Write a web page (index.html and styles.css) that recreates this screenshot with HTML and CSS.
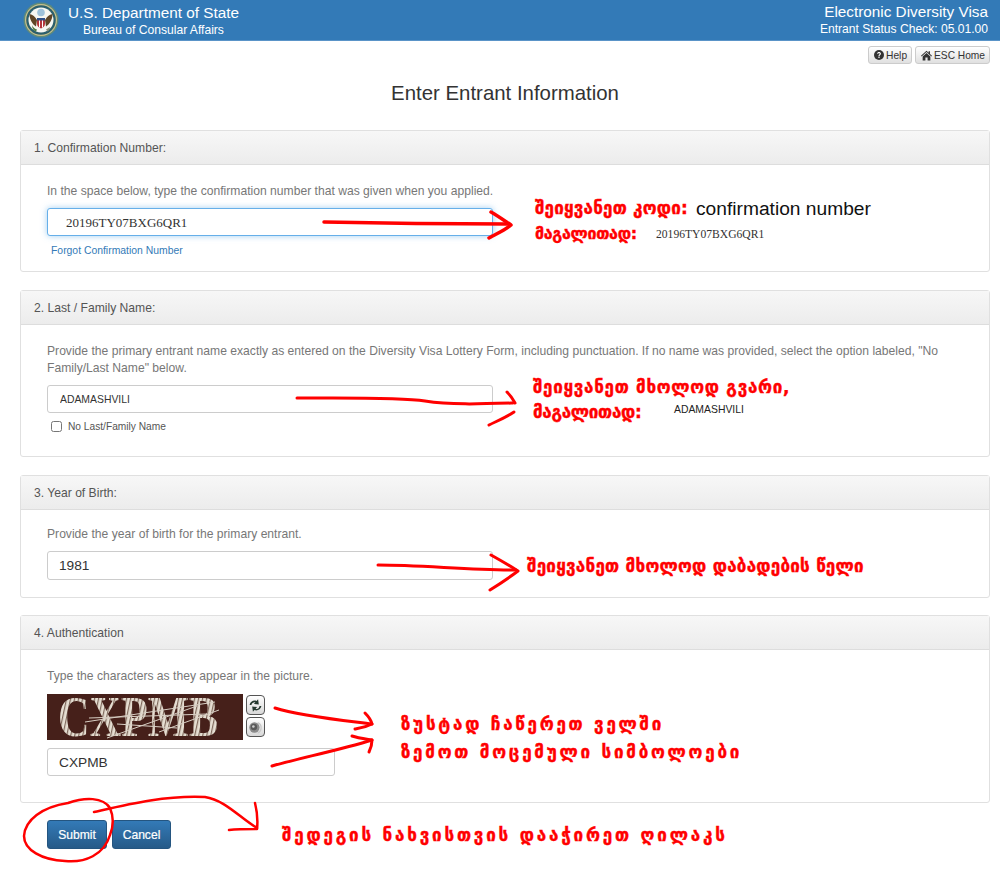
FILE: index.html
```html
<!DOCTYPE html>
<html lang="ka">
<head>
  <meta charset="UTF-8" />
  <title>Electronic Diversity Visa</title>
  <link rel="stylesheet" href="styles.css">
</head>
<body>
  <header class="topbar">
    <div class="brand">
      <svg class="seal" viewBox="0 0 36 36" width="36" height="36">
        <circle cx="18" cy="18" r="17.5" fill="#5e8a7c"/>
        <circle cx="18" cy="18" r="16" fill="#c9c08a"/>
        <circle cx="18" cy="18" r="14.800" fill="#2c5f6c"/>
        <circle cx="18" cy="18" r="12.500" fill="#f7f7f2"/>
        <circle cx="18" cy="10.500" r="3.800" fill="#9fc2da"/>
        <path d="M6.500 12c3.500.5 5.500 2.500 7.500 6l-1 6.500c-3.500-2-6.500-7-6.500-12.500zM29.500 12c-3.500.5-5.500 2.500-7.500 6l1 6.500c3.500-2 6.500-7 6.500-12.500z" fill="#5f4526"/>
        <path d="M14 16h8v6c0 2-2 3.500-4 4.500-2-1-4-2.500-4-4.500z" fill="#b5353a"/>
        <path d="M14 16h8v2.500h-8z" fill="#2f4f86"/>
        <path d="M16 18.500h1v7h-1zM19 18.500h1v7h-1z" fill="#fff"/>
        <path d="M9 23c1 2.500 3 4 5 4.500l-1 2c-2-.5-4-3-4-6.500z" fill="#4d7a3f"/>
        <path d="M27 25l-4 2.500 1.500 2c1.500-1 2.500-2.500 2.500-4.500z" fill="#8a8f7a"/>
      </svg>
      <div class="brand-text">
        <div class="brand-title">U.S. Department of State</div>
        <div class="brand-sub">Bureau of Consular Affairs</div>
      </div>
    </div>
    <div class="app-info">
      <div class="app-title">Electronic Diversity Visa</div>
      <div class="app-sub">Entrant Status Check: 05.01.00</div>
    </div>
  </header>

  <main class="page">
    <nav class="tools">
      <a class="tool-btn">
        <svg viewBox="0 0 12 12" width="10" height="10"><circle cx="6" cy="6" r="6" fill="#333"/><path d="M3.800 4.600C3.800 3.300 4.800 2.500 6 2.500s2.300.8 2.300 2c0 1.700-1.600 1.500-1.600 3H5.300c0-2.100 1.500-1.900 1.500-3 0-.4-.3-.8-.8-.8s-.9.4-.9.9zM5.300 8.200h1.400v1.400H5.300z" fill="#fff"/></svg>
        Help
      </a>
      <a class="tool-btn">
        <svg viewBox="0 0 12 12" width="11" height="11"><path d="M6 .8L0 6.300l.7.7L6 2.200 11.300 7l.7-.7L9.800 4.300V1.300H8.300v1.600zM1.800 7.200v4.300h3V8.200h2.400v3.300h3V7.200L6 3.400z" fill="#333"/></svg>
        ESC Home
      </a>
    </nav>

    <h1 class="page-title">Enter Entrant Information</h1>

    <section class="panel">
      <div class="panel-head">1. Confirmation Number:</div>
      <div class="panel-body body-confirm">
        <p class="hint">In the space below, type the confirmation number that was given when you applied.</p>
        <input class="field field-code" type="text" value="20196TY07BXG6QR1">
        <a class="forgot">Forgot Confirmation Number</a>
      </div>
    </section>

    <section class="panel">
      <div class="panel-head">2. Last / Family Name:</div>
      <div class="panel-body body-name">
        <p class="hint">Provide the primary entrant name exactly as entered on the Diversity Visa Lottery Form, including punctuation. If no name was provided, select the option labeled, "No Family/Last Name" below.</p>
        <input class="field field-name" type="text" value="ADAMASHVILI">
        <label class="check"><input type="checkbox"> No Last/Family Name</label>
      </div>
    </section>

    <section class="panel panel-year">
      <div class="panel-head">3. Year of Birth:</div>
      <div class="panel-body body-year">
        <p class="hint">Provide the year of birth for the primary entrant.</p>
        <input class="field field-big" type="text" value="1981">
      </div>
    </section>

    <section class="panel">
      <div class="panel-head">4. Authentication</div>
      <div class="panel-body body-auth">
        <p class="hint">Type the characters as they appear in the picture.</p>
        <div class="captcha-row">
          <svg class="captcha" viewBox="0 0 196 46" width="196" height="46">
            <defs>
              <pattern id="stripes" width="4" height="5" patternUnits="userSpaceOnUse" patternTransform="skewX(-12)">
                <rect width="4" height="5" fill="#e6ded2"/>
                <rect width="1.200" height="5" fill="#7d675a"/>
              </pattern>
            </defs>
            <rect width="196" height="46" fill="#46201a"/>
            <text class="captcha-text" x="11" y="42" fill="url(#stripes)" textLength="160" lengthAdjust="spacingAndGlyphs">CXPMB</text>
            <path d="M38 28L168 8M42 24L160 20M60 44L150 12M112 38L172 16M70 30L130 34" stroke="#d8cfc4" stroke-width="1" fill="none"/>
          </svg>
          <div class="captcha-tools">
            <button class="captcha-btn" type="button">
              <svg viewBox="0 0 14 14" width="15" height="15"><path d="M1.500 6.500C2 3.500 5.300 1.600 8 2.800L9.400 1.200l.7 4.800-4.600-.5 1.400-1.500C5.300 3.700 3.600 4.600 3.200 6.500zM12.500 7.500c-.5 3-3.800 4.900-6.500 3.700l-1.400 1.600-.7-4.800 4.600.5-1.400 1.500c1.600.8 3.300-.1 3.700-2.500z" fill="#24392f"/></svg>
            </button>
            <button class="captcha-btn" type="button">
              <svg viewBox="0 0 14 14" width="15" height="15"><path d="M9 2.500c2.500 1 3.500 3 3.200 5.500-.3 2.200-1.600 3.500-3.200 4" stroke="#c8c8c8" stroke-width="1.200" fill="none"/><circle cx="6" cy="7" r="4.800" fill="#8a8a8a"/><circle cx="5.500" cy="6.500" r="3" fill="#5a5a5a"/><circle cx="5" cy="6" r="1.200" fill="#cfcfcf"/></svg>
            </button>
          </div>
        </div>
        <input class="field field-big field-short" type="text" value="CXPMB">
      </div>
    </section>

    <div class="actions">
      <button class="btn" type="button">Submit</button>
      <button class="btn btn-cancel" type="button">Cancel</button>
    </div>
  </main>

  <!-- notes painted over the screenshot -->
  <svg class="scribble" viewBox="0 0 1000 872" width="1000" height="872">
    <g fill="none" stroke="#f00" stroke-linecap="round" stroke-linejoin="round">
      <path stroke-width="3.500" d="M324 222C370 223 440 224 508 224"/>
      <path stroke-width="3.500" d="M491 212C498 216 505 221 511 225C505 230 496 234 489 238"/>
      <path stroke-width="3" d="M297 398C340 398 400 397 425 401C450 405 480 404 513 403"/>
      <path stroke-width="3" d="M507 392C510 395 513 399 515 403"/>
      <path stroke-width="3" d="M514 412C505 418 497 421 489 425"/>
      <path stroke-width="3" d="M378 565C420 565 470 570 516 570"/>
      <path stroke-width="3" d="M491 555C500 560 510 566 518 571C510 577 498 585 490 590"/>
      <path stroke-width="3" d="M275 708C300 716 340 720 372 724"/>
      <path stroke-width="3" d="M365 713C368 716 371 720 372 724C366 727 360 728 355 729"/>
      <path stroke-width="3" d="M272 766C300 758 340 750 372 740"/>
      <path stroke-width="3" d="M352 736C358 738 366 739 372 740C372 744 371 748 369 752"/>
      <path stroke-width="2.500" d="M94 812C125 805 165 795 205 797C225 800 240 818 257 828"/>
      <path stroke-width="2.500" d="M255 803C257 811 258 820 257 829C248 829 238 829 229 830"/>
      <path stroke-width="2.500" d="M110 808C103 797 85 797 68 803C42 807 25 820 24 836C24 850 42 860 65 861C85 863 104 855 110 835C114 825 113 815 110 808Z"/>
    </g>
  </svg>

  <div class="note note-1">შეიყვანეთ კოდი:</div>
  <div class="note-en">confirmation number</div>
  <div class="note note-2">მაგალითად:</div>
  <div class="note-code">20196TY07BXG6QR1</div>
  <div class="note note-3">შეიყვანეთ მხოლოდ გვარი,</div>
  <div class="note note-4">მაგალითად:</div>
  <div class="note-name">ADAMASHVILI</div>
  <div class="note note-5">შეიყვანეთ მხოლოდ დაბადების წელი</div>
  <div class="note note-6">ზუსტად ჩაწერეთ ველში</div>
  <div class="note note-7">ზემოთ მოცემული სიმბოლოები</div>
  <div class="note note-8">შედეგის ნახვისთვის დააჭირეთ ღილაკს</div>
</body>
</html>
```

FILE: styles.css
```css
* {
  box-sizing: border-box;
}

body {
  margin: 0;
  font-family: "Liberation Sans", Arial, sans-serif;
  font-size: 12.13px;
  color: #555;
  background: #fff;
  position: relative;
  height: 872px;
  overflow: hidden;
}

.topbar {
  display: flex;
  justify-content: space-between;
  height: 41px;
  padding: 0 12px 0 23px;
  background-color: #337ab7;
  border-bottom: 1px solid #5a94c8;
  color: #fff;
}

.brand {
  display: flex;
  align-items: center;
  gap: 9px;
}

.seal {
  flex: none;
}

.brand-text {
  text-align: center;
}

.brand-title {
  font-size: 15.300px;
  line-height: 20px;
}

.brand-sub {
  font-size: 12.100px;
  line-height: 15px;
}

.app-info {
  text-align: right;
}

.app-title {
  font-size: 15.300px;
  line-height: 20px;
  margin-top: 2px;
}

.app-sub {
  font-size: 12.100px;
  line-height: 15px;
}

.page {
  padding: 5px 10px 0 20px;
}

.tools {
  display: flex;
  justify-content: flex-end;
  gap: 3px;
}

.tool-btn {
  display: flex;
  align-items: center;
  gap: 2px;
  height: 18px;
  padding: 0 4px 0 5px;
  font-size: 10.200px;
  color: #333;
  border: 1px solid #ccc;
  border-radius: 3px;
  background: linear-gradient(#fff, #e0e0e0);
}

.page-title {
  margin: 18px 0 25px;
  font-size: 20.400px;
  line-height: 23px;
  font-weight: normal;
  text-align: center;
  color: #333;
}

.panel {
  margin-bottom: 18px;
  background: #fff;
  border: 1px solid #e0e0e0;
  border-radius: 3px;
}

.panel-year {
  margin-bottom: 17px;
}

.panel-head {
  height: 34px;
  padding: 0 13px;
  line-height: 35px;
  color: #555;
  background: linear-gradient(#f7f7f7, #ececec);
  border-bottom: 1px solid #ddd;
}

.panel-body {
  padding: 18px 26px 0;
}

.body-confirm {
  height: 106px;
}

.body-name {
  height: 131px;
}

.body-year {
  height: 87px;
  padding-top: 16px;
}

.body-year .field {
  height: 29px;
}

.body-auth {
  height: 152px;
}

.body-auth .hint {
  margin-bottom: 9px;
}

.hint {
  margin: 0 0 8px;
  line-height: 17px;
  color: #777;
}

.field {
  display: block;
  width: 446px;
  height: 28px;
  padding: 0 12px;
  font-family: "Liberation Sans", Arial, sans-serif;
  font-size: 10.400px;
  color: #333;
  background: #fff;
  border: 1px solid #ccc;
  border-radius: 3px;
  outline: none;
}

.field-code {
  padding: 2px 0 0 18px;
  font-family: "Liberation Serif", serif;
  font-size: 13px;
  border-color: #66afe9;
  box-shadow: 0 0 6px rgba(102, 175, 233, 0.6);
}

.field-big {
  padding-left: 11px;
  font-size: 13.700px;
}

.field-short {
  width: 288px;
}

.forgot {
  display: block;
  margin: 9px 0 0 4px;
  font-size: 10.400px;
  line-height: 12px;
  color: #337ab7;
}

.check {
  display: flex;
  align-items: center;
  gap: 6px;
  margin: 7px 0 0 4px;
  font-size: 10.200px;
  line-height: 13px;
}

.check input {
  width: 11px;
  height: 11px;
  margin: 0;
}

.captcha-row {
  display: flex;
  gap: 3px;
  margin-bottom: 8px;
}

.captcha {
  display: block;
  overflow: visible;
}

.captcha-text {
  font-family: "Liberation Serif", serif;
  font-size: 58px;
  font-weight: bold;
}

.captcha-tools {
  display: flex;
  flex-direction: column;
  gap: 2px;
  padding-top: 1px;
}

.captcha-btn {
  display: flex;
  align-items: center;
  justify-content: center;
  width: 19px;
  height: 20px;
  padding: 0;
  background: linear-gradient(#fff, #d8d8d8);
  border: 1px solid #555;
  border-radius: 4px;
}

.actions {
  display: flex;
  gap: 5px;
  margin: -1px 0 0 27px;
}

.btn {
  width: 60px;
  height: 29px;
  padding: 0;
  font-family: "Liberation Sans", Arial, sans-serif;
  font-size: 12.100px;
  color: #fff;
  -webkit-text-stroke: 0.2px #fff;
  background: linear-gradient(#337ab7, #265a88);
  border: 1px solid #245580;
  border-radius: 3px;
}

.btn-cancel {
  width: 59px;
}

.scribble {
  position: absolute;
  left: 0;
  top: 0;
  pointer-events: none;
}

.note {
  position: absolute;
  font-family: "DejaVu Sans", sans-serif;
  font-weight: bold;
  font-size: 17px;
  line-height: 20px;
  color: #f00;
  white-space: nowrap;
  -webkit-text-stroke: 0.4px #f00;
}

.note-1 { left: 535px; top: 198px; letter-spacing: 0.2px; }
.note-2 { left: 535px; top: 224px; font-size: 16px; letter-spacing: -0.3px; }
.note-3 { left: 533px; top: 377px; letter-spacing: 0.7px; }
.note-4 { left: 533px; top: 402px; letter-spacing: -0.3px; }
.note-5 { left: 527px; top: 556px; letter-spacing: 0.25px; }
.note-6 { left: 401px; top: 714px; letter-spacing: 2.750px; }
.note-7 { left: 401px; top: 742px; letter-spacing: 2.750px; }
.note-8 { left: 282px; top: 825px; letter-spacing: 2.800px; }

.note-en {
  position: absolute;
  left: 696px;
  top: 199px;
  font-size: 19.200px;
  line-height: 20px;
  color: #111;
  white-space: nowrap;
}

.note-code {
  position: absolute;
  left: 656px;
  top: 228px;
  font-family: "Liberation Serif", serif;
  font-size: 11.600px;
  line-height: 14px;
  color: #333;
}

.note-name {
  position: absolute;
  left: 674px;
  top: 403px;
  font-size: 10.400px;
  line-height: 14px;
  color: #222;
}
```
